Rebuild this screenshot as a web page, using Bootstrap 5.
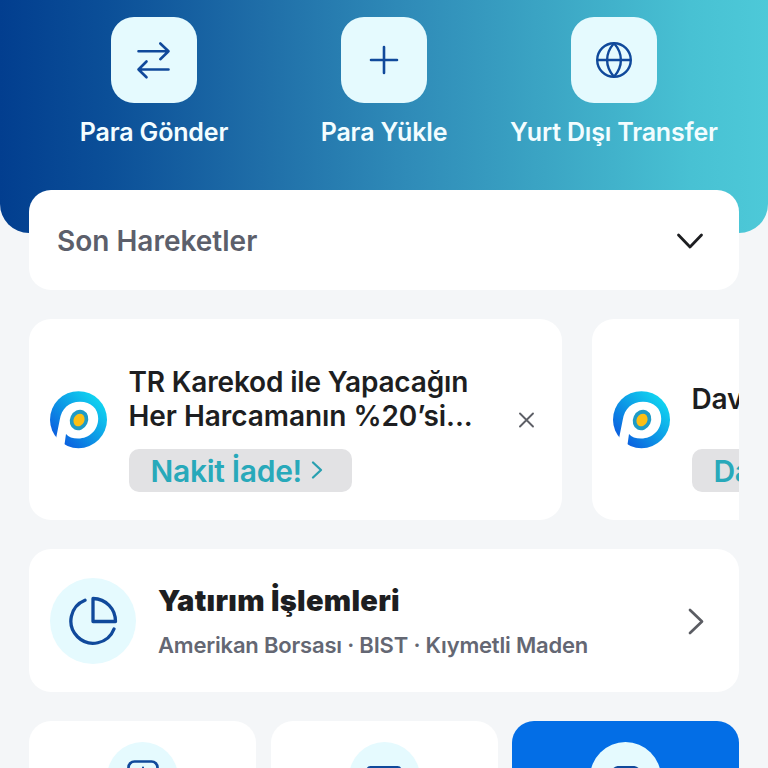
<!DOCTYPE html>
<html lang="tr">
<head>
  <meta charset="UTF-8">
  <meta name="viewport" content="width=device-width, initial-scale=1">
  <title>Ana Sayfa</title>
  <link href="https://cdn.jsdelivr.net/npm/bootstrap@5.3.0/dist/css/bootstrap.min.css" rel="stylesheet">
  <style>
    body {
      height: 768px;
      overflow: hidden;
      background: #f4f6f8;
      font-family: Inter, "Liberation Sans", sans-serif;
      color: #1d1e21;
    }
    svg { display: block; flex-shrink: 0; }
    .hero {
      height: 233px;
      padding: 17px 39px 0;
      border-radius: 0 0 29px 29px;
      background: linear-gradient(90deg, #023e8f 0%, #0b4f98 14%, #1f6ea8 34%, #2f8bb8 53%, #3ba5c4 71%, #48c1d3 90%, #4dc9d8 100%);
    }
    .quick { width: 230px; }
    .quick-icon {
      width: 86px;
      height: 86px;
      border-radius: 23px;
      background: #e5fafe;
    }
    .quick-label {
      margin-top: 14px;
      font-size: 25px;
      line-height: 31px;
      font-weight: 600;
      letter-spacing: -0.17px;
      color: #f3fdff;
      white-space: nowrap;
    }
    .page { padding: 0 29px; margin-top: -43px; }
    .panel { background: #fff; border-radius: 22px; }
    .recent { height: 100px; padding: 1px 35px 0 28px; }
    .recent-title { font-size: 28px; font-weight: 600; color: #5c5f6b; }
    .promos { height: 201px; margin-top: 29px; gap: 30px; }
    .promo { width: 533px; padding-left: 20.5px; flex-shrink: 0; }
    .promo-body { width: 356px; margin-left: 21px; padding-top: 46px; }
    .promo-close { margin-right: 21px; }
    .promo-text {
      height: 68px;
      font-size: 28px;
      line-height: 34px;
      font-weight: 600;
      letter-spacing: -0.17px;
      white-space: nowrap;
    }
    .promo-line2 { letter-spacing: -0.05px; }
    .promo-link {
      height: 43px;
      margin-top: 16px;
      padding: 1px 28px 0 22px;
      border-radius: 10px;
      background: #e2e2e4;
      color: #28a9ba;
      font-size: 30px;
      font-weight: 600;
      letter-spacing: -0.3px;
      white-space: nowrap;
    }
    .invest { height: 143px; margin-top: 29px; padding: 0 35px 0 21px; }
    .invest-icon { width: 86px; height: 86px; background: #e5fafe; }
    .invest-body { margin-left: 22px; }
    .invest-title { margin-top: 1px; font-size: 29px; line-height: 34px; font-weight: 900; letter-spacing: 0.3px; }
    .invest-sub {
      margin-top: 13px;
      font-size: 22px;
      line-height: 28px;
      font-weight: 600;
      letter-spacing: -0.19px;
      color: #646773;
    }
    .tiles { margin-top: 29px; gap: 14.5px; }
    .tile { flex: 1 0 0; height: 200px; padding-top: 21px; }
    .tile-blue { background: #036ee6; }
    .tile-icon { width: 71px; height: 71px; background: #e5fafe; }
  </style>
</head>
<body>
  <svg width="0" height="0" class="position-absolute">
    <defs>
      <linearGradient id="ring" x1="0.9" y1="0.2" x2="0.2" y2="0.9">
        <stop offset="0" stop-color="#10d2f0"/>
        <stop offset="0.5" stop-color="#0d9be6"/>
        <stop offset="1" stop-color="#0b5fdf"/>
      </linearGradient>
      <symbol id="logo" viewBox="0 0 58 58">
        <circle cx="28.5" cy="28.7" r="28.5" fill="url(#ring)"/>
        <path fill="#fff" d="M5.500 50 L9.700 29 C11.500 17.500 19 10.700 30 10.700 C41 10.700 48.200 17.500 48.200 27.500 C48.200 39 39.500 47.500 28 47.500 C22.500 47.500 18.500 46 16 43 L14.300 55 L3.500 58 Z"/>
        <ellipse cx="29" cy="29" rx="9" ry="10.500" transform="rotate(25 29 29)" fill="#1f9bc6"/>
        <ellipse cx="29" cy="29" rx="5.400" ry="6.500" transform="rotate(25 29 29)" fill="#fdbf14"/>
      </symbol>
    </defs>
  </svg>

  <header class="hero d-flex">
    <div class="quick d-flex flex-column align-items-center">
      <div class="quick-icon d-flex align-items-center justify-content-center">
        <svg width="36" height="40" viewBox="0 0 36 40" fill="none" stroke="#10499b" stroke-width="2.6" stroke-linecap="round" stroke-linejoin="round">
          <path d="M2.500 11.300H32.500M24.300 3.500L32.500 11.300L24.300 19.200M32.500 29.500H2.500M10.500 21.500L2.500 29.500L10.500 37.300"/>
        </svg>
      </div>
      <div class="quick-label">Para Gönder</div>
    </div>
    <div class="quick d-flex flex-column align-items-center">
      <div class="quick-icon d-flex align-items-center justify-content-center">
        <svg width="32" height="32" viewBox="0 0 32 32" fill="none" stroke="#10499b" stroke-width="2.6" stroke-linecap="round">
          <path d="M3 16H29M16 3V29"/>
        </svg>
      </div>
      <div class="quick-label">Para Yükle</div>
    </div>
    <div class="quick d-flex flex-column align-items-center">
      <div class="quick-icon d-flex align-items-center justify-content-center">
        <svg width="38" height="38" viewBox="0 0 38 38" fill="none" stroke="#10499b" stroke-width="2.4">
          <circle cx="19" cy="19" r="16.800"/>
          <path d="M2.200 19H35.800M19 2.200C9.800 12.500 9.800 25.500 19 35.800M19 2.200C28.200 12.500 28.200 25.500 19 35.800"/>
        </svg>
      </div>
      <div class="quick-label">Yurt Dışı Transfer</div>
    </div>
  </header>

  <main class="page">
    <section class="panel recent d-flex align-items-center justify-content-between">
      <span class="recent-title">Son Hareketler</span>
      <svg width="29" height="18" viewBox="0 0 29 18" fill="none" stroke="#1d1e21" stroke-width="2.8" stroke-linecap="round" stroke-linejoin="round">
        <path d="M3.500 3L15 15L26.500 3"/>
      </svg>
    </section>

    <section class="promos d-flex overflow-hidden">
      <div class="panel promo d-flex">
        <svg class="align-self-center" width="58" height="58"><use href="#logo"/></svg>
        <div class="promo-body">
          <div class="promo-text">TR Karekod ile Yapacağın<br><span class="promo-line2">Her Harcamanın %20’si...</span></div>
          <div class="promo-link d-inline-flex align-items-center gap-2">Nakit İade!
            <svg width="14" height="22" viewBox="0 0 14 22" fill="none" stroke="#28a0b0" stroke-width="2.3" stroke-linecap="round" stroke-linejoin="round">
              <path d="M3 2.500L11 10L3 17.500"/>
            </svg>
          </div>
        </div>
        <svg class="promo-close align-self-center ms-auto" width="24" height="24" viewBox="0 0 24 24" fill="none" stroke="#5d5f66" stroke-width="1.900" stroke-linecap="round">
          <path d="M3 5.500L16 18.500M16 5.500L3 18.500"/>
        </svg>
      </div>
      <div class="panel promo d-flex">
        <svg class="align-self-center" width="58" height="58"><use href="#logo"/></svg>
        <div class="promo-body">
          <div class="promo-text d-flex align-items-center">Davet Et</div>
          <div class="promo-link d-inline-flex align-items-center">Davet Et</div>
        </div>
      </div>
    </section>

    <section class="panel invest d-flex align-items-center">
      <div class="invest-icon rounded-circle d-flex align-items-center justify-content-center">
        <svg width="52" height="52" viewBox="0 0 52 52" fill="none" stroke="#10499b" stroke-width="3.300" stroke-linecap="round" stroke-linejoin="round">
          <path d="M18 5.200A22.300 22.300 0 1 0 47 34"/>
          <path d="M26 3.500V26.500H48.500C48.500 13.500 39 4 26 3.500Z"/>
        </svg>
      </div>
      <div class="invest-body">
        <div class="invest-title">Yatırım İşlemleri</div>
        <div class="invest-sub">Amerikan Borsası · BIST · Kıymetli Maden</div>
      </div>
      <svg class="ms-auto" width="18" height="30" viewBox="0 0 18 30" fill="none" stroke="#5b5d63" stroke-width="2.700" stroke-linecap="round" stroke-linejoin="round">
        <path d="M4 4L16 15.500L4 27"/>
      </svg>
    </section>

    <section class="tiles d-flex">
      <div class="panel tile d-flex justify-content-center">
        <div class="tile-icon rounded-circle d-flex justify-content-center pt-3">
          <svg width="34" height="44" viewBox="0 0 34 44" fill="none" stroke="#10499b" stroke-width="2.700">
            <rect x="2.500" y="3.500" width="29" height="38" rx="6"/>
            <path d="M17 9.500V15" stroke-width="2" stroke-linecap="round"/>
          </svg>
        </div>
      </div>
      <div class="panel tile d-flex justify-content-center">
        <div class="tile-icon rounded-circle d-flex justify-content-center pt-4">
          <svg width="36" height="30" viewBox="0 0 36 30" fill="#10499b">
            <rect x="0.500" y="0" width="35" height="28" rx="4"/>
          </svg>
        </div>
      </div>
      <div class="panel tile tile-blue d-flex justify-content-center">
        <div class="tile-icon rounded-circle d-flex justify-content-center pt-4">
          <svg width="32" height="30" viewBox="0 0 32 30" fill="none" stroke="#10499b" stroke-width="2.700">
            <rect x="2.500" y="1.3" width="27" height="26" rx="6"/>
          </svg>
        </div>
      </div>
    </section>
  </main>
  <script src="https://cdn.jsdelivr.net/npm/bootstrap@5.3.0/dist/js/bootstrap.bundle.min.js"></script>
</body>
</html>
